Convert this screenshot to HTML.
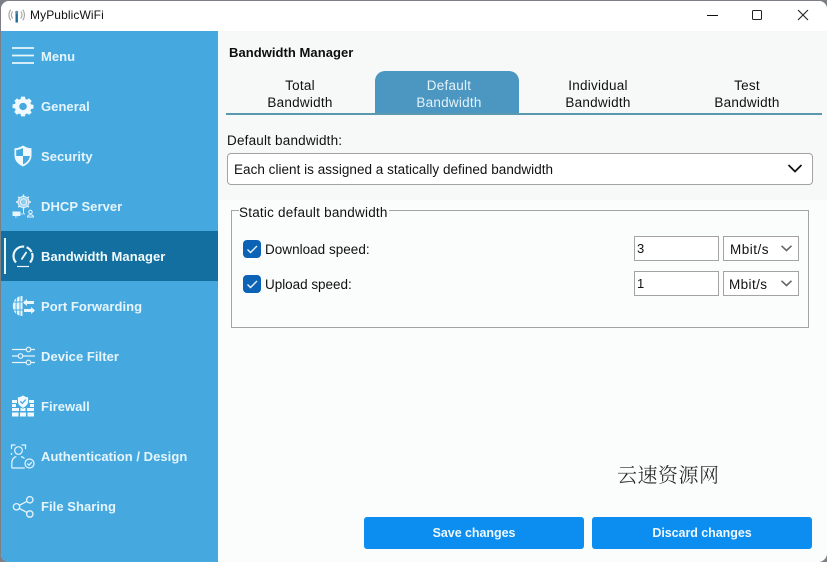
<!DOCTYPE html>
<html><head><meta charset="utf-8">
<style>
html,body{margin:0;padding:0;width:827px;height:562px;overflow:hidden;background:#7d7f86}
*{box-sizing:border-box}
#win{position:absolute;left:1px;top:1px;width:826px;height:561px;background:#fbfcfc;border-radius:8px 8px 9px 8px;overflow:hidden;font-family:"Liberation Sans","DejaVu Sans",sans-serif;color:#111}
#abs{position:absolute;left:-1px;top:-1px;width:827px;height:562px}
#abs>*{position:absolute}
.t{white-space:nowrap;font-size:13.5px;line-height:17px;letter-spacing:.2px}
.n{white-space:nowrap;font-size:13px;line-height:17px;font-weight:bold;color:#e6f5fc;left:41px;letter-spacing:.05px}
.c{text-align:center;width:140px;font-size:13.5px;line-height:17px;letter-spacing:.25px}
svg{overflow:visible}
.chk{width:18px;height:18px;background:#0c63b5;border-radius:4px}
.inp{background:#fff;border:1px solid #a3a3a3;height:25px}
.btn{background:#0c8df0;color:#eef8ff;font-weight:bold;font-size:12.5px;letter-spacing:-.05px;text-align:center;border-radius:3px;height:32px;line-height:33px;width:220px;top:517px}
</style></head><body>
<div id="win"><div id="abs">
<div style="left:0;top:0;width:827px;height:31px;background:#fff"></div>
<div style="left:218px;top:31px;width:609px;height:170px;background:#f7f8f8"></div>
<div style="left:218px;top:200px;width:609px;height:362px;background:#fbfcfc"></div>
<div style="left:0;top:31px;width:218px;height:531px;background:#45a9e0"></div>
<div style="left:0;top:231px;width:218px;height:50px;background:#136f9f"></div>
<div style="left:4px;top:238px;width:2px;height:36px;background:#e8f5fb"></div>

<!-- title -->
<svg style="left:9px;top:8px" width="16" height="16" viewBox="0 0 16 16" fill="none" stroke="#a9a9a9" stroke-width="1.2">
<path d="M3.6 3.5c-1.6 2-1.6 5 0 7M1.7 1.8c-2.3 3-2.3 7.400 0 10.400M11.800 3.500c1.600 2 1.600 5 0 7M13.700 1.800c2.300 3 2.300 7.400 0 10.400"/>
<path d="M7.700 5v9.500" stroke="#1f6b96" stroke-width="2.400"/><circle cx="7.700" cy="4.200" r="1.500" fill="#5b8ea8" stroke="none"/></svg>
<div class="t" style="left:30px;top:7px;font-size:12px;letter-spacing:.1px">MyPublicWiFi</div>
<div style="left:707px;top:15px;width:11px;height:1px;background:#111"></div>
<div style="left:752px;top:10px;width:10px;height:10px;border:1.200px solid #222;border-radius:1.500px"></div>
<svg style="left:798px;top:10px" width="10" height="10" viewBox="0 0 10 10" stroke="#222" stroke-width="1.100"><path d="M0 0L10 10M10 0L0 10"/></svg>

<!-- menu -->
<svg style="left:12px;top:47px" width="22" height="17" stroke="#e8f5fb" stroke-width="1.700"><path d="M0 1h22M0 8.500h22M0 16h22"/></svg>
<div class="n" style="top:48px">Menu</div>

<svg style="left:13px;top:96px" width="20" height="20" viewBox="0 0 24 24" fill="#f0f9fd"><path fill-rule="evenodd" d="M9.500 0h5l.7 3.300 2 .9L20 2.300l3.500 3.600-1.800 2.800.8 2 3.300.7v5l-3.300.7-.8 2 1.800 2.800L20 25l-2.800-1.800-2 .8-.7 3.200h-5l-.7-3.200-2-.8L4 25 .5 21.100l1.800-2.800-.8-2-3.300-.7v-5l3.300-.7.8-2L.5 5.900 4 2.300l2.800 1.900 2-.9zM12 8.500a5 5 0 1 0 0 10 5 5 0 0 0 0-10z" transform="translate(1.100 .8) scale(.91 .87)"/></svg>
<div class="n" style="top:98px">General</div>

<svg style="left:14px;top:145px" width="18" height="22" viewBox="0 0 18 22"><path d="M9 .5C6.500 2.300 3.500 3.200.5 3.300v7.200c0 5 3.500 8.800 8.500 11 5-2.200 8.500-6 8.500-11V3.300C14.500 3.200 11.500 2.300 9 .5z" fill="#f0f9fd"/><path d="M9 3v8H2.200v-6C4.800 4.800 7 4.200 9 3zM9 11h6.800c-.3 3.800-3.200 6.800-6.800 8.400z" fill="#45a9e0"/></svg>
<div class="n" style="top:148px">Security</div>

<svg style="left:12px;top:194px" width="23" height="24" viewBox="0 0 23 24" fill="none" stroke="#e8f5fb" stroke-width="1">
<circle cx="11.500" cy="8" r="5.500" fill="#8fcdee"/><circle cx="11.500" cy="8" r="3.200"/><path d="M11.500 .5v2M11.500 13.500v2M4 8h2M17 8h2M6.200 2.700l1.400 1.400M15.400 11.900l1.400 1.400M16.800 2.700l-1.400 1.400M7.600 11.900l-1.400 1.400" stroke-width="1.400"/>
<rect x="1" y="18" width="7" height="3.500" fill="#e8f5fb"/><path d="M3 23h3M9 20h5" stroke-dasharray="1.500 1"/><circle cx="18.500" cy="18" r="1.700"/><path d="M15.500 23c0-3 6-3 6 0z"/><path d="M11.500 15.500v4"/></svg>
<div class="n" style="top:198px">DHCP Server</div>

<svg style="left:12px;top:245px" width="22" height="23" viewBox="0 0 22 23" fill="none" stroke="#eef8fc" stroke-width="2.200">
<path d="M4 17.500A9.500 9.500 0 1 1 18 17.500" stroke-dasharray="23 2.500 7 1"/><path d="M9.500 14.500L14.500 7" stroke-width="1.800"/><path d="M5 21.500h12" stroke-width="1.200"/></svg>
<div class="n" style="top:248px;color:#f2fafd">Bandwidth Manager</div>

<svg style="left:12px;top:295px" width="23" height="22" viewBox="0 0 23 22" fill="none" stroke="#e8f5fb" stroke-width="1.300">
<path d="M10.500 1C4.500 1 .8 5.500.8 11s3.700 10 9.700 10z" fill="#e8f5fb" stroke="none"/>
<path d="M5 1.500C3.700 7 3.700 15 5 20.500M1 7h10M1 15h10M8 1v20" stroke="#45a9e0" stroke-width=".9"/>
<path d="M12 7.500h10M12 15.500h10" stroke-width="3"/><path d="M15 4l-4 3.500 4 3.500z" fill="#e8f5fb" stroke="none"/><path d="M19 12l4 3.500-4 3.500z" fill="#e8f5fb" stroke="none"/></svg>
<div class="n" style="top:298px">Port Forwarding</div>

<svg style="left:11px;top:346px" width="24" height="20" viewBox="0 0 24 20" fill="none" stroke="#e8f5fb" stroke-width="1.200">
<path d="M1 3.500h14M20 3.500h4M1 10h6M12 10h12M1 16.500h14M20 16.500h4"/><circle cx="17.500" cy="3.500" r="2.300"/><circle cx="9.500" cy="10" r="2.300"/><circle cx="17.500" cy="16.500" r="2.300"/></svg>
<div class="n" style="top:348px">Device Filter</div>

<svg style="left:12px;top:395px" width="22" height="22" viewBox="0 0 22 22" fill="#f0f9fd">
<path d="M0 5h5v3H0zM17 5h5v3h-5zM0 9h4v3H0zM18 9h4v3h-4zM0 13h7v3H0zM8.500 13h5v3h-5zM15 13h7v3h-7zM0 17.500h6.500v4H0zM8 17.500h6v4H8zM15.500 17.500H22v4h-6.500z"/>
<path d="M11 0C9.300 1.200 7.500 1.800 5.500 2v4.500c0 3 2.300 5.300 5.500 6.800 3.200-1.500 5.500-3.800 5.500-6.800V2C14.500 1.800 12.700 1.200 11 0z" stroke="#45a9e0" stroke-width=".8"/>
<path d="M8.300 6.300l2 2 3.500-3.700" fill="none" stroke="#45a9e0" stroke-width="1.300"/></svg>
<div class="n" style="top:398px">Firewall</div>

<svg style="left:11px;top:444px" width="24" height="25" viewBox="0 0 24 25" fill="none" stroke="#e8f5fb" stroke-width="1.200">
<path d="M.5 5V1h4M10.500 1h4v4M.5 9v2"/><circle cx="7.500" cy="6.500" r="3.800"/><path d="M.8 24v-5c0-4 2.500-6 4.500-6.500M10 12.500c1.500.4 2.500 1 3.500 2M.8 24h13"/><circle cx="18.500" cy="19.500" r="4.500"/><path d="M16.300 19.500l1.700 1.700 2.800-3"/></svg>
<div class="n" style="top:448px">Authentication / Design</div>

<svg style="left:12px;top:495px" width="23" height="23" viewBox="0 0 23 23" fill="none" stroke="#e8f5fb" stroke-width="1.300">
<circle cx="17.800" cy="4.800" r="3.200"/><circle cx="4.500" cy="11.800" r="3.200"/><circle cx="17.800" cy="19" r="3.200"/><path d="M7.300 10.300l7.700-4M7.300 13.400l7.700 4"/></svg>
<div class="n" style="top:498px">File Sharing</div>

<!-- content -->
<div class="t" style="left:229px;top:44px;font-size:13px;font-weight:bold;letter-spacing:.05px;color:#0d0d0d">Bandwidth Manager</div>

<div style="left:226px;top:113px;width:596px;height:2px;background:#5b99ae"></div>
<div style="left:375px;top:71px;width:144px;height:42px;background:#4b97c2;border-radius:10px 10px 0 0"></div>
<div class="c" style="left:230px;top:77px">Total<br>Bandwidth</div>
<div class="c" style="left:379px;top:77px;color:#e4f2f9">Default<br>Bandwidth</div>
<div class="c" style="left:528px;top:77px">Individual<br>Bandwidth</div>
<div class="c" style="left:677px;top:77px">Test<br>Bandwidth</div>

<div class="t" style="left:227px;top:132px;letter-spacing:.19px">Default bandwidth:</div>
<div style="left:227px;top:153px;width:586px;height:32px;background:#fff;border:1px solid #a3a3a3;border-radius:4px"></div>
<div class="t" style="left:234px;top:161px;letter-spacing:.03px">Each client is assigned a statically defined bandwidth</div>
<svg style="left:788px;top:164px" width="14" height="9" fill="none" stroke="#111" stroke-width="1.700"><path d="M.5 1l6.500 6.500L13.500 1"/></svg>

<div style="left:231px;top:210px;width:578px;height:118px;border:1px solid #a3a3a3"></div>
<div class="t" style="left:239px;top:204px;padding-right:1px;background:#fbfcfc;letter-spacing:.22px">Static default bandwidth</div>

<div class="chk" style="left:243px;top:240px"></div>
<svg style="left:247px;top:245px" width="11" height="9" fill="none" stroke="#e9f4fc" stroke-width="1.400"><path d="M.5 4.500l3 3L10 1"/></svg>
<div class="t" style="left:265px;top:241px;letter-spacing:.02px">Download speed:</div>
<div class="chk" style="left:243px;top:275px"></div>
<svg style="left:247px;top:280px" width="11" height="9" fill="none" stroke="#e9f4fc" stroke-width="1.400"><path d="M.5 4.500l3 3L10 1"/></svg>
<div class="t" style="left:265px;top:276px;letter-spacing:-.03px">Upload speed:</div>

<div class="inp" style="left:634px;top:236px;width:85px"></div>
<div class="t" style="left:637px;top:240px;font-size:13px">3</div>
<div class="inp" style="left:723px;top:236px;width:76px"></div>
<div class="t" style="left:730px;top:241px;letter-spacing:.5px">Mbit/s</div>
<svg style="left:781px;top:245px" width="11" height="7" fill="none" stroke="#666" stroke-width="1.600"><path d="M.5 .8L5.500 5.500L10.500 .8"/></svg>

<div class="inp" style="left:634px;top:271px;width:85px"></div>
<div class="t" style="left:637px;top:275px;font-size:13px">1</div>
<div class="inp" style="left:723px;top:271px;width:76px"></div>
<div class="t" style="left:729px;top:276px;letter-spacing:.4px">Mbit/s</div>
<svg style="left:781px;top:280px" width="11" height="7" fill="none" stroke="#666" stroke-width="1.600"><path d="M.5 .8L5.500 5.500L10.500 .8"/></svg>

<div class="t" style="left:617px;top:462px;font-size:20px;line-height:24px;letter-spacing:.5px;color:#222;font-family:'Noto Serif CJK SC','Liberation Serif',serif;font-weight:300">云速资源网</div>

<div class="btn" style="left:364px">Save changes</div>
<div class="btn" style="left:592px">Discard changes</div>
</div></div>
</body></html>
